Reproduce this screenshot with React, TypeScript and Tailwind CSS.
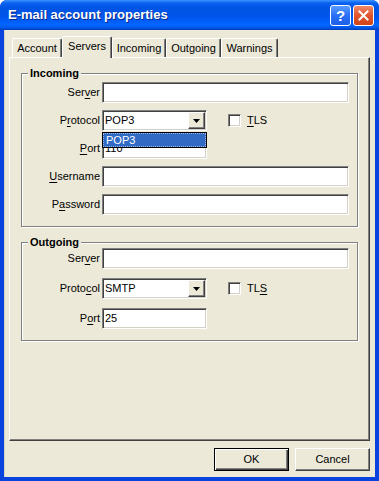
import React from "react";

const sunken =
  "border border-t-[#808080] border-l-[#808080] border-r-white border-b-white shadow-[inset_1px_1px_0_#404040,inset_-1px_-1px_0_#D4D0C8]";
const raised =
  "border border-t-white border-l-white border-r-[#404040] border-b-[#404040] shadow-[inset_-1px_-1px_0_#808080]";

function U({ c }: { c: string }) {
  return <span className="underline underline-offset-[2px]">{c}</span>;
}

function Label({ children }: { children: React.ReactNode }) {
  return <div className="w-[80px] pr-[2px] text-right shrink-0 leading-[13px]">{children}</div>;
}

function TextField({ w, value }: { w: string; value?: string }) {
  return (
    <div className={`${w} h-[21px] bg-white ${sunken} p-[1px] pl-[2px] flex items-center leading-[13px]`}>
      {value}
    </div>
  );
}

function Arrow() {
  return (
    <svg width="7" height="4" viewBox="0 0 7 4">
      <polygon points="0,0 7,0 3.5,4" fill="#000" />
    </svg>
  );
}

function Select({ value, open }: { value: string; open?: boolean }) {
  return (
    <div className={`relative w-[105px] h-[21px] bg-white ${sunken} p-[1px] flex items-center`}>
      <span className="flex-1 pl-[1px] leading-[13px]">{value}</span>
      <div className={`w-[17px] h-[17px] bg-[#ECE9D8] ${raised} flex items-center justify-center`}>
        <Arrow />
      </div>
      {open && (
        <div className="absolute -left-[1px] top-[21px] w-[105px] h-[16px] bg-white border border-black p-0 z-20">
          <div className="h-full bg-[#316AC5] text-white border border-dotted border-[#9FB8E8] pl-[2px] flex items-center leading-[12px]">
            POP3
          </div>
        </div>
      )}
    </div>
  );
}

function Check({ label }: { label: React.ReactNode }) {
  return (
    <div className="flex items-center ml-[21px]">
      <div className={`w-[13px] h-[13px] bg-white ${sunken}`} />
      <span className="ml-[6px] leading-[13px]">{label}</span>
    </div>
  );
}

function Tab({ w, label, active }: { w: string; label: string; active?: boolean }) {
  if (active) {
    return (
      <div
        className={`${w} h-[22px] -mb-[1px] relative z-10 bg-[#ECE9D8] border-t border-l border-r border-t-white border-l-white border-r-[#404040] shadow-[inset_-1px_0_0_#808080] rounded-t-[2px] flex items-start justify-center pt-[3px] leading-[13px]`}
      >
        {label}
      </div>
    );
  }
  return (
    <div
      className={`${w} h-[19px] bg-[#ECE9D8] border-t border-l border-r border-t-white border-l-white border-r-[#404040] shadow-[inset_-1px_0_0_#808080] rounded-t-[2px] flex items-center justify-center leading-[13px]`}
    >
      {label}
    </div>
  );
}

function Group({
  title,
  children,
  pt,
  pb,
  gap,
}: {
  title: string;
  children: React.ReactNode;
  pt: string;
  pb: string;
  gap: string;
}) {
  return (
    <fieldset
      className={`w-full border border-[#808080] shadow-[1px_1px_0_white,inset_1px_1px_0_white] ${pt} ${pb}`}
    >
      <legend className="ml-[6px] px-[2px] bg-[#ECE9D8] font-bold leading-[12px] text-[11px]">{title}</legend>
      <div className={`flex flex-col ${gap}`}>{children}</div>
    </fieldset>
  );
}

function Row({ label, children }: { label: React.ReactNode; children: React.ReactNode }) {
  return (
    <div className="flex items-center h-[21px]">
      <Label>{label}</Label>
      {children}
    </div>
  );
}

export default function App() {
  return (
    <div className="w-[379px] h-[481px] bg-white font-['Liberation_Sans',Arial,sans-serif] text-[11px] text-black">
      <div className="w-full h-full flex flex-col rounded-t-[7px] overflow-hidden bg-[#0843DE]">
        {/* Title bar */}
        <div className="h-[30px] shrink-0 flex items-center pl-[8px] pr-[5px] bg-[linear-gradient(180deg,#3D95FF_0%,#0A62F0_10%,#0055E5_25%,#0055EA_55%,#005DF8_70%,#0466FF_82%,#0058EC_92%,#003EB5_100%)]">
          <span className="flex-1 text-white font-bold text-[13px] leading-[16px] [text-shadow:1px_1px_0_#0A2A8A]">
            E-mail account properties
          </span>
          <div className="flex gap-[2px]">
            <div className="w-[21px] h-[21px] rounded-[3px] border border-white bg-[linear-gradient(180deg,#5A9BFF_0%,#2A6FF5_50%,#1C5FE8_100%)] flex items-center justify-center text-white font-bold text-[15px] leading-none">
              ?
            </div>
            <div className="w-[21px] h-[21px] rounded-[3px] border border-white bg-[linear-gradient(180deg,#F08A6A_0%,#E0552C_50%,#CF4418_100%)] flex items-center justify-center">
              <svg width="11" height="11" viewBox="0 0 11 11">
                <path d="M1.5 1.5 L9.5 9.5 M9.5 1.5 L1.5 9.5" stroke="#fff" strokeWidth="2" strokeLinecap="square" />
              </svg>
            </div>
          </div>
        </div>

        {/* Body */}
        <div className="flex-1 mx-[4px] mb-[4px] bg-[#ECE9D8] flex flex-col shadow-[inset_1px_0_0_#D8D4C4]">
          {/* Tabs */}
          <div className="h-[27px] pt-[6px] pl-[8px] flex items-end shrink-0">
            <Tab w="w-[50px]" label="Account" />
            <Tab w="w-[50px]" label="Servers" active />
            <Tab w="w-[54px]" label="Incoming" />
            <Tab w="w-[55px]" label="Outgoing" />
            <Tab w="w-[57px]" label="Warnings" />
          </div>

          {/* Panel */}
          <div className="h-[384px] mx-[5px] shrink-0 border border-t-white border-l-white border-r-[#404040] border-b-[#404040] shadow-[inset_-1px_-1px_0_#808080] px-[11px] pt-[9px] flex flex-col gap-[9px]">
            <Group title="Incoming" pt="pt-[3px]" pb="pb-[11px]" gap="gap-[7px]">
              <Row label={<>Ser<U c="v" />er</>}>
                <TextField w="w-[247px]" />
              </Row>
              <div className="flex items-center h-[21px] relative z-20">
                <Label>
                  P<U c="r" />otocol
                </Label>
                <Select value="POP3" open />
                <Check label={<><U c="T" />LS</>} />
              </div>
              <Row label={<><U c="P" />ort</>}>
                <TextField w="w-[105px]" value="110" />
              </Row>
              <Row label={<><U c="U" />sername</>}>
                <TextField w="w-[247px]" />
              </Row>
              <Row label={<>P<U c="a" />ssword</>}>
                <TextField w="w-[247px]" />
              </Row>
            </Group>

            <Group title="Outgoing" pt="pt-0" pb="pb-[11px]" gap="gap-[9px]">
              <Row label={<>Ser<U c="v" />er</>}>
                <TextField w="w-[247px]" />
              </Row>
              <div className="flex items-center h-[21px]">
                <Label>
                  Proto<U c="c" />ol
                </Label>
                <Select value="SMTP" />
                <Check label={<>TL<U c="S" /></>} />
              </div>
              <Row label={<>P<U c="o" />rt</>}>
                <TextField w="w-[105px]" value="25" />
              </Row>
            </Group>
          </div>

          {/* Buttons */}
          <div className="flex justify-end gap-[6px] pt-[7px] pr-[5px]">
            <div className="w-[75px] h-[23px] bg-[#ECE9D8] border border-black shadow-[inset_1px_1px_0_white,inset_-1px_-1px_0_#404040,inset_-2px_-2px_0_#808080] flex items-center justify-center leading-[13px]">
              OK
            </div>
            <div className={`w-[75px] h-[23px] bg-[#ECE9D8] ${raised} flex items-center justify-center leading-[13px]`}>
              Cancel
            </div>
          </div>
        </div>
      </div>
    </div>
  );
}
